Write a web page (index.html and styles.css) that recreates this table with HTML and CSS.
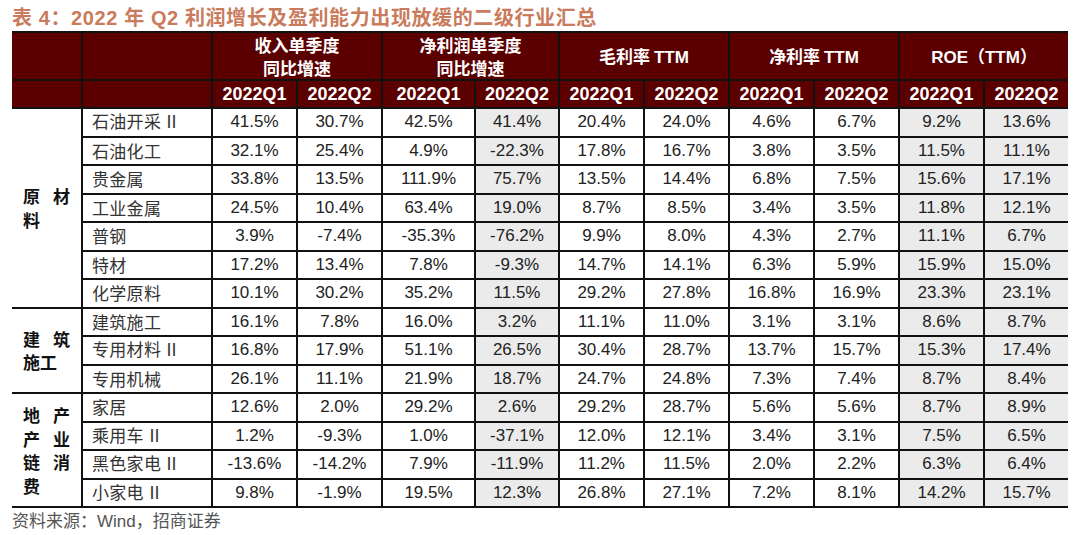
FILE: index.html
```html
<!DOCTYPE html>
<html lang="zh-CN">
<head>
<meta charset="utf-8">
<title>表4</title>
<link rel="stylesheet" href="styles.css">
</head>
<body>
<div class="page">
  <div class="title">表 4：2022 年 Q2 利润增长及盈利能力出现放缓的二级行业汇总</div>
  <table class="tbl">
    <colgroup>
      <col class="w-g"><col class="w-n">
      <col class="w-85"><col class="w-85">
      <col class="w-93"><col class="w-84">
      <col class="w-85"><col class="w-85">
      <col class="w-85"><col class="w-85">
      <col class="w-85"><col class="w-84">
    </colgroup>
    <thead>
      <tr class="h1">
        <th class="first"></th><th></th>
        <th colspan="2">收入单季度<br>同比增速</th>
        <th colspan="2">净利润单季度<br>同比增速</th>
        <th colspan="2">毛利率 <span class="lat">TTM</span></th>
        <th colspan="2">净利率 <span class="lat">TTM</span></th>
        <th colspan="2" class="last"><span class="lat">ROE</span>（<span class="lat">TTM</span>）</th>
      </tr>
      <tr class="h2">
        <th class="first"></th><th></th>
        <th>2022Q1</th><th>2022Q2</th>
        <th>2022Q1</th><th>2022Q2</th>
        <th>2022Q1</th><th>2022Q2</th>
        <th>2022Q1</th><th>2022Q2</th>
        <th>2022Q1</th><th class="last">2022Q2</th>
      </tr>
    </thead>
    <tbody>
      <tr>
        <td class="grp" rowspan="7"><div class="gl"><div class="jl"><span>原</span><span>材</span></div><div>料</div></div></td>
        <td class="name">石油开采<span class="rn">Ⅱ</span></td><td>41.5%</td><td>30.7%</td><td>42.5%</td><td class="g">41.4%</td><td>20.4%</td><td>24.0%</td><td>4.6%</td><td>6.7%</td><td class="g">9.2%</td><td class="g last">13.6%</td>
      </tr>
      <tr><td class="name">石油化工</td><td>32.1%</td><td>25.4%</td><td>4.9%</td><td class="g">-22.3%</td><td>17.8%</td><td>16.7%</td><td>3.8%</td><td>3.5%</td><td class="g">11.5%</td><td class="g last">11.1%</td></tr>
      <tr><td class="name">贵金属</td><td>33.8%</td><td>13.5%</td><td>111.9%</td><td class="g">75.7%</td><td>13.5%</td><td>14.4%</td><td>6.8%</td><td>7.5%</td><td class="g">15.6%</td><td class="g last">17.1%</td></tr>
      <tr><td class="name">工业金属</td><td>24.5%</td><td>10.4%</td><td>63.4%</td><td class="g">19.0%</td><td>8.7%</td><td>8.5%</td><td>3.4%</td><td>3.5%</td><td class="g">11.8%</td><td class="g last">12.1%</td></tr>
      <tr><td class="name">普钢</td><td>3.9%</td><td>-7.4%</td><td>-35.3%</td><td class="g">-76.2%</td><td>9.9%</td><td>8.0%</td><td>4.3%</td><td>2.7%</td><td class="g">11.1%</td><td class="g last">6.7%</td></tr>
      <tr><td class="name">特材</td><td>17.2%</td><td>13.4%</td><td>7.8%</td><td class="g">-9.3%</td><td>14.7%</td><td>14.1%</td><td>6.3%</td><td>5.9%</td><td class="g">15.9%</td><td class="g last">15.0%</td></tr>
      <tr><td class="name">化学原料</td><td>10.1%</td><td>30.2%</td><td>35.2%</td><td class="g">11.5%</td><td>29.2%</td><td>27.8%</td><td>16.8%</td><td>16.9%</td><td class="g">23.3%</td><td class="g last">23.1%</td></tr>
      <tr>
        <td class="grp" rowspan="3"><div class="gl"><div class="jl"><span>建</span><span>筑</span></div><div>施工</div></div></td>
        <td class="name">建筑施工</td><td>16.1%</td><td>7.8%</td><td>16.0%</td><td class="g">3.2%</td><td>11.1%</td><td>11.0%</td><td>3.1%</td><td>3.1%</td><td class="g">8.6%</td><td class="g last">8.7%</td>
      </tr>
      <tr><td class="name">专用材料<span class="rn">Ⅱ</span></td><td>16.8%</td><td>17.9%</td><td>51.1%</td><td class="g">26.5%</td><td>30.4%</td><td>28.7%</td><td>13.7%</td><td>15.7%</td><td class="g">15.3%</td><td class="g last">17.4%</td></tr>
      <tr><td class="name">专用机械</td><td>26.1%</td><td>11.1%</td><td>21.9%</td><td class="g">18.7%</td><td>24.7%</td><td>24.8%</td><td>7.3%</td><td>7.4%</td><td class="g">8.7%</td><td class="g last">8.4%</td></tr>
      <tr>
        <td class="grp" rowspan="4"><div class="gl"><div class="jl"><span>地</span><span>产</span></div><div class="jl"><span>产</span><span>业</span></div><div class="jl"><span>链</span><span>消</span></div><div>费</div></div></td>
        <td class="name">家居</td><td>12.6%</td><td>2.0%</td><td>29.2%</td><td class="g">2.6%</td><td>29.2%</td><td>28.7%</td><td>5.6%</td><td>5.6%</td><td class="g">8.7%</td><td class="g last">8.9%</td>
      </tr>
      <tr><td class="name">乘用车<span class="rn">Ⅱ</span></td><td>1.2%</td><td>-9.3%</td><td>1.0%</td><td class="g">-37.1%</td><td>12.0%</td><td>12.1%</td><td>3.4%</td><td>3.1%</td><td class="g">7.5%</td><td class="g last">6.5%</td></tr>
      <tr><td class="name">黑色家电<span class="rn">Ⅱ</span></td><td>-13.6%</td><td>-14.2%</td><td>7.9%</td><td class="g">-11.9%</td><td>11.2%</td><td>11.5%</td><td>2.0%</td><td>2.2%</td><td class="g">6.3%</td><td class="g last">6.4%</td></tr>
      <tr><td class="name">小家电<span class="rn">Ⅱ</span></td><td>9.8%</td><td>-1.9%</td><td>19.5%</td><td class="g">12.3%</td><td>26.8%</td><td>27.1%</td><td>7.2%</td><td>8.1%</td><td class="g">14.2%</td><td class="g last">15.7%</td></tr>
    </tbody>
  </table>
  <div class="src">资料来源：<span class="lat">Wind</span>，招商证券</div>
</div>
</body>
</html>
```

FILE: styles.css
```css
html, body {
  margin: 0;
  padding: 0;
  background: #ffffff;
}

.page {
  padding: 5px 12px 0 12px;
  font-family: "Noto Sans CJK SC", "Liberation Sans", sans-serif;
}

.title {
  font-size: 20px;
  line-height: 26px;
  font-weight: 700;
  color: #c97b5c;
  letter-spacing: 0.6px;
  white-space: nowrap;
  font-family: "Liberation Sans", "Noto Sans CJK SC", sans-serif;
}

.tbl {
  border-collapse: collapse;
  table-layout: fixed;
  width: 1056px;
  border-top: 2px solid #111;
  border-bottom: 2px solid #111;
}

.w-g { width: 70px; }
.w-n { width: 130px; }
.w-85 { width: 85px; }
.w-84 { width: 84px; }
.w-93 { width: 93px; }

.tbl th {
  background: #5b0000;
  color: #ffffff;
  font-weight: 700;
  font-size: 17px;
  line-height: 23px;
  border: 2px solid #111;
  padding: 0;
  text-align: center;
  vertical-align: middle;
  font-family: "Noto Sans CJK SC", "Liberation Sans", sans-serif;
}

.tbl .h1 th { height: 43px; }
.tbl .h2 th {
  height: 26px;
  font-family: "Liberation Sans", sans-serif;
  font-size: 18px;
}

.lat {
  font-family: "Liberation Sans", sans-serif;
}

.tbl th.first, .tbl td.grp { border-left: none; }
.tbl th.last, .tbl td.last { border-right: none; }

.tbl td {
  border: 2px solid #111;
  padding: 0;
  height: 26.5px;
  text-align: center;
  vertical-align: middle;
  font-family: "Liberation Sans", sans-serif;
  font-size: 17px;
  color: #222;
  line-height: 20px;
}

.tbl td.g { background: #ebebeb; }

.tbl td.name {
  text-align: left;
  padding-left: 9px;
  font-family: "Noto Sans CJK SC", sans-serif;
  font-weight: 400;
  font-size: 17px;
  letter-spacing: 0.3px;
  color: #333;
}

.rn {
  font-family: "Liberation Serif", serif;
  font-size: 17px;
  margin-left: 2px;
}

.tbl td.grp {
  text-align: left;
  padding-left: 11px;
}

.gl {
  width: 47px;
  font-family: "Noto Sans CJK SC", sans-serif;
  font-weight: 700;
  font-size: 17px;
  line-height: 23.5px;
  color: #111;
}

.jl {
  display: flex;
  justify-content: space-between;
}

.src {
  margin-top: 1px;
  font-size: 17px;
  line-height: 22px;
  color: #555;
  font-family: "Noto Sans CJK SC", "Liberation Sans", sans-serif;
}
```
